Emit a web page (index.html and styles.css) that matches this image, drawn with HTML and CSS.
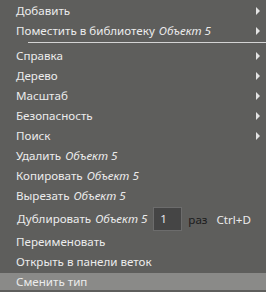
FILE: index.html
```html
<!DOCTYPE html>
<html>
<head>
<meta charset="utf-8">
<link rel="stylesheet" href="styles.css">
</head>
<body>
<div class="menu">
  <div class="item sub"><span class="label">Добавить</span></div>
  <div class="item sub"><span class="label">Поместить в библиотеку <i class="obj">Объект 5</i></span></div>
  <div class="sep"></div>
  <div class="item sub"><span class="label">Справка</span></div>
  <div class="item sub"><span class="label">Дерево</span></div>
  <div class="item sub"><span class="label">Масштаб</span></div>
  <div class="item sub"><span class="label">Безопасность</span></div>
  <div class="item sub"><span class="label">Поиск</span></div>
  <div class="item"><span class="label">Удалить <i class="obj">Объект 5</i></span></div>
  <div class="item"><span class="label">Копировать <i class="obj">Объект 5</i></span></div>
  <div class="item"><span class="label">Вырезать <i class="obj">Объект 5</i></span></div>
  <div class="item dup">
    <span class="label">Дублировать <i class="obj">Объект 5</i></span>
    <span class="count">1</span>
    <span class="times">раз</span>
    <span class="shortcut">Ctrl+D</span>
  </div>
  <div class="item"><span class="label">Переименовать</span></div>
  <div class="item"><span class="label">Открыть в панели веток</span></div>
  <div class="item hover"><span class="label">Сменить тип</span></div>
</div>
</body>
</html>
```
FILE: styles.css
```css
html, body {
  margin: 0;
  padding: 0;
  background: #5e5e5c;
}
.menu {
  width: 266px;
  height: 292px;
  padding-top: 1px;
  box-sizing: border-box;
  font-family: "Noto Sans", "Open Sans", sans-serif;
  font-size: 11.6px;
  letter-spacing: 0;
  color: #ececec;
  display: flex;
  flex-direction: column;
}
.item {
  height: 20px;
  display: flex;
  align-items: center;
  padding-left: 16px;
  padding-right: 6px;
  white-space: nowrap;
}
.label {
  line-height: 20px;
}
.obj {
  font-style: italic;
  margin-left: 1px;
}
.sub::after {
  content: "";
  margin-left: auto;
  width: 0;
  height: 0;
  border-top: 4px solid transparent;
  border-bottom: 4px solid transparent;
  border-left: 4px solid #e4e4e4;
}
.sep {
  height: 1px;
  margin: 1px 0 3px 28px;
  background: #d4d4d4;
}
.dup {
  height: 26px;
  padding-left: 17px;
}
.count {
  box-sizing: border-box;
  width: 29px;
  height: 24px;
  margin-left: 6px;
  padding-left: 6px;
  background: #454545;
  border: 1px solid #6c6c6c;
  line-height: 22px;
  color: #e8e8e8;
}
.times {
  margin-left: 6px;
  color: #1c1c1c;
}
.shortcut {
  margin-left: 9px;
}
.hover {
  height: 17px;
  margin-top: 1px;
  background: #8a8a88;
}
```
